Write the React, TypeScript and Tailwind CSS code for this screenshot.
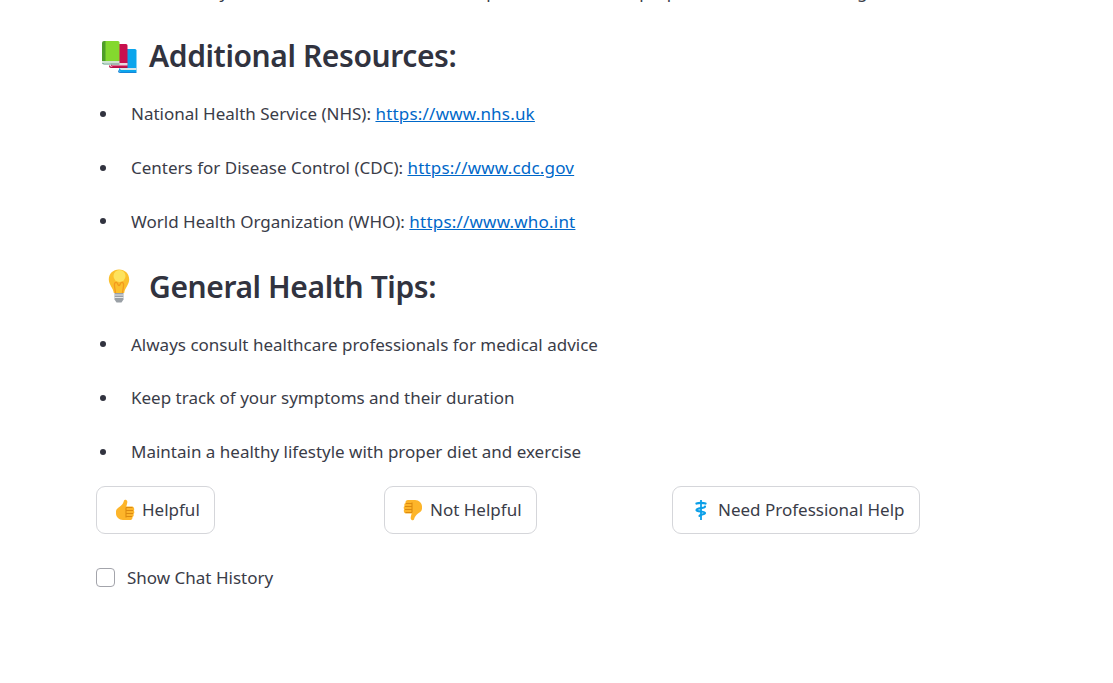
import React from "react";

const Books = () => (
  <svg width="36" height="34" viewBox="0 0 36 34" className="ml-[5px] mt-[3px] shrink-0">
    <path d="M18 9h16a1.500 1.500 0 0 1 1.500 1.500V32H20a2 2 0 0 1-2-2z" fill="#0ba5ec" />
    <path d="M18 28h17.500v2H20z" fill="#d9e6ea" />
    <path d="M18 30a2 2 0 0 0 2 2h15.500v1H19a2 2 0 0 1-2-2z" fill="#1585d8" />
    <path d="M10 4h15a1.500 1.500 0 0 1 1.500 1.500V27H12a2 2 0 0 1-2-2z" fill="#c8104e" />
    <path d="M9 23h17.500v2.500H11z" fill="#e9d6dc" />
    <path d="M9 25a2 2 0 0 0 2 2h15.500v1H10a2 2 0 0 1-2-2z" fill="#b40e45" />
    <path d="M3 1h14a1.500 1.500 0 0 1 1.500 1.500V21H3z" fill="#84d82e" />
    <path d="M1 3a2 2 0 0 1 2-2h1.500v20H1z" fill="#4f9e29" />
    <path d="M1 21h17.500v2H3a2 2 0 0 1-2-2z" fill="#cfe3d2" />
    <path d="M1 22.500a2 2 0 0 0 2 2h15.500V23.500H3z" fill="#5c9a80" />
  </svg>
);

const Bulb = () => (
  <svg width="22" height="34" viewBox="0 0 22 34" className="shrink-0">
    <path d="M11 .5C5 .5.800 4.700.800 10.500c0 5.200 4.200 8 5 13.500h10.400c.8-5.500 5-8.300 5-13.500C21.200 4.700 17 .5 11 .5z" fill="#fbc02d" />
    <circle cx="11.500" cy="7" r="6" fill="#fde35e" />
    <path d="M7.500 24c-.3-4-1.500-7-1-9 .5-2 2.500-2 3-.5.500 1.500.5 2 1.500 2s1-.5 1.500-2 2.500-1.500 3 .5-.7 5-1 9" fill="none" stroke="#f39a1e" strokeWidth="1.300" />
    <path d="M6.500 24h9v6.500l-2 3h-5l-2-3z" fill="#9aa0a6" />
    <path d="M6.500 26h9M6.500 28.500h9" stroke="#e4e6e8" strokeWidth="1" />
  </svg>
);

const ThumbUp = () => (
  <svg width="20" height="22" viewBox="0 0 20 22" className="shrink-0">
    <path d="M1 12.500c0-2.500 2-3.500 4-5 2-1.500 3.500-3.500 4-6C9.300.3 12 .3 12.300 2.500c.2 1.500-.6 3.500-1 5H17c2.500 0 2.500 3.400 1.800 4.200.9 1 .6 2.800-.3 3.300.5 1.200 0 2.500-1 3 .2 1.500-.7 3-2.500 3H8C4 21 1 18 1 14.500z" fill="#fdb52a" />
    <path d="M11 8.500h6.500M11 11.500h7M11 14.500h7M11 17.500h6M11 8.500v10" stroke="#dc8a10" strokeWidth="1.100" fill="none" />
  </svg>
);

const ThumbDown = () => (
  <svg width="20" height="22" viewBox="0 0 20 22" className="shrink-0">
    <path d="M19 9.500c0 2.500-2 3.500-4 5-2 1.500-3.500 3.500-4 6-.3 1.200-3 1.200-3.300-1-.2-1.500.6-3.500 1-5H3C.5 14.500.5 11.100 1.200 10.300.3 9.300.6 7.500 1.500 7 1 5.800 1.500 4.500 2.500 4 2.300 2.500 3.200 1 5 1h7c4 0 7 3 7 6.500z" fill="#fdb52a" />
    <path d="M9 13.500H2.500M9 10.500H2M9 7.500H2M9 4.500H3M9 13.500v-10" stroke="#dc8a10" strokeWidth="1.100" fill="none" />
  </svg>
);

const Caduceus = () => (
  <svg width="12" height="20" viewBox="0 0 12 20" className="shrink-0">
    <path d="M6 0v20" stroke="#0b9fe8" strokeWidth="1.800" />
    <path d="M1.500 3.500c2-.8 7-.8 9 0M10 6.500c0 2-8.500 1.300-8.500 3.500 0 2 8.500 1 8.500 3 0 1.700-5.500 1.300-5.500 3" stroke="#0b9fe8" strokeWidth="2.200" fill="none" strokeLinecap="round" />
  </svg>
);

const Bullet = ({ children }: { children: React.ReactNode }) => (
  <li className="flex h-[53.800px] items-center">
    <span className="ml-[4px] mr-[25px] h-[6px] w-[6px] rounded-full bg-[#31333f]" />
    <span>{children}</span>
  </li>
);

const Link = ({ href }: { href: string }) => (
  <a href={href} className="text-[#0068c9] underline tracking-[0.2px]">{href}</a>
);

const Btn = ({ icon, label }: { icon: React.ReactNode; label: string }) => (
  <button className="flex h-[48px] items-center rounded-[9px] border border-[#d5d6da] bg-white pl-[18px] pr-[14px] text-[#3a3c48]">
    <span className="mr-[8px] flex w-[19px] justify-center">{icon}</span>
    <span>{label}</span>
  </button>
);

export default function App() {
  return (
    <div className="h-[683px] overflow-hidden bg-white pl-[96px] text-[17px] text-[#3a3c48] [font-family:'Noto_Sans','Liberation_Sans',sans-serif]">
      <p className="-mt-[20px] h-[24px] whitespace-nowrap leading-[24px]">
        Note: this is only a reference aid, and it cannot replace the advice of proper medical staff for diagnosis.
      </p>
      <h2 className="mt-[27px] flex h-[48px] items-center gap-[12px] text-[30px] font-semibold tracking-[-0.4px] text-[#31333f]">
        <Books />
        <span>Additional Resources:</span>
      </h2>
      <ul className="mt-[8px]">
        <Bullet>National Health Service (NHS): <Link href="https://www.nhs.uk" /></Bullet>
        <Bullet>Centers for Disease Control (CDC): <Link href="https://www.cdc.gov" /></Bullet>
        <Bullet>World Health Organization (WHO): <Link href="https://www.who.int" /></Bullet>
      </ul>
      <h2 className="mt-[14px] flex h-[48px] items-center gap-[19px] pl-[12px] text-[30px] font-semibold tracking-[-0.4px] text-[#31333f]">
        <Bulb />
        <span>General Health Tips:</span>
      </h2>
      <ul className="mt-[7px]">
        <Bullet>Always consult healthcare professionals for medical advice</Bullet>
        <Bullet>Keep track of your symptoms and their duration</Bullet>
        <Bullet>Maintain a healthy lifestyle with proper diet and exercise</Bullet>
      </ul>
      <div className="mt-[7px] grid w-[864px] grid-cols-3 justify-items-start">
        <Btn icon={<ThumbUp />} label="Helpful" />
        <Btn icon={<ThumbDown />} label="Not Helpful" />
        <Btn icon={<Caduceus />} label="Need Professional Help" />
      </div>
      <label className="mt-[34px] flex h-[19px] items-center gap-[12px]">
        <span className="h-[19px] w-[19px] rounded-[4px] border border-[#a3a4ab] bg-white" />
        <span>Show Chat History</span>
      </label>
    </div>
  );
}
